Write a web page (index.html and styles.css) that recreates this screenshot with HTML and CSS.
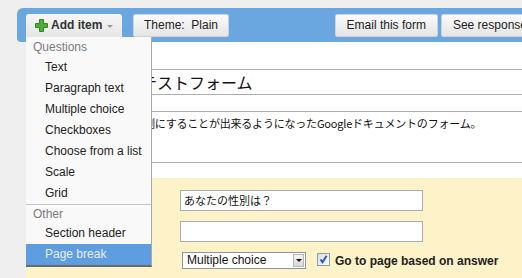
FILE: index.html
```html
<!DOCTYPE html>
<html>
<head>
<meta charset="utf-8">
<link rel="stylesheet" href="styles.css">
</head>
<body>
<div class="page">
  <div class="toolbar">
    <div class="additem">
      <button class="btn btn-add">
        <svg class="plus" width="13" height="13" viewBox="0 0 13 13"><path d="M4.5 0.5h4v4h4v4h-4v4h-4v-4h-4v-4h4z" fill="#4bae36" stroke="#2f8a22" stroke-width="1"/></svg>
        <span class="add-label">Add item</span>
        <span class="caret"></span>
      </button>
      <div class="menu">
        <div class="menu-head">Questions</div>
        <div class="menu-item">Text</div>
        <div class="menu-item">Paragraph text</div>
        <div class="menu-item">Multiple choice</div>
        <div class="menu-item">Checkboxes</div>
        <div class="menu-item">Choose from a list</div>
        <div class="menu-item">Scale</div>
        <div class="menu-item">Grid</div>
        <div class="menu-sep"></div>
        <div class="menu-head menu-head-other">Other</div>
        <div class="menu-item">Section header</div>
        <div class="menu-item active">Page break</div>
      </div>
    </div>
    <button class="btn btn-theme">Theme:&nbsp; Plain</button>
    <div class="right">
      <button class="btn btn-r">Email this form</button>
      <button class="btn btn-r">See responses</button>
    </div>
  </div>
  <div class="content">
    <div class="head">
      <div class="title-box">テストフォーム</div>
      <div class="desc-box">例にすることが出来るようになったGoogleドキュメントのフォーム。</div>
    </div>
    <div class="question">
      <div class="field">あなたの性別は？</div>
      <div class="field"></div>
      <div class="row">
        <div class="select">
          <span class="select-text">Multiple choice</span>
          <span class="select-arrow"><span class="tri"></span></span>
        </div>
        <svg class="check" width="13" height="13" viewBox="0 0 13 13"><defs><linearGradient id="cg" x1="0" y1="0" x2="1" y2="1"><stop offset="0" stop-color="#dcdcd6"/><stop offset="1" stop-color="#ffffff"/></linearGradient></defs><rect x="0.5" y="0.5" width="12" height="12" fill="url(#cg)" stroke="#8d9bad"/><path d="M3.5 6.5L5.5 9.2L9.6 2.8" stroke="#2a59d2" stroke-width="2" fill="none"/></svg>
        <span class="go-label">Go to page based on answer</span>
      </div>
    </div>
  </div>
</div>
</body>
</html>
```

FILE: styles.css
```css
html, body {
  margin: 0;
  padding: 0;
  overflow: hidden;
}
body {
  background: #efefef;
  font-family: "Liberation Sans", Arial, sans-serif;
  font-size: 12px;
  color: #222;
  width: 522px;
  height: 278px;
}
.page {
  padding: 8px 0 0 17px;
  width: 580px;
}
.toolbar {
  display: flex;
  align-items: flex-start;
  width: 537px;
  height: 34px;
  box-sizing: border-box;
  padding: 6px 9px 0 9px;
  background: #6aa6df;
  border-radius: 6px 0 0 4px;
  gap: 11px;
}
.btn {
  height: 23px;
  box-sizing: border-box;
  border: 1px solid #cfd3d7;
  border-radius: 2px;
  background: linear-gradient(#fbfbfb, #e4e4e4);
  font-family: "Liberation Sans", Arial, sans-serif;
  font-size: 12px;
  color: #222;
  padding: 0 10px;
  margin: 0;
  line-height: 21px;
  white-space: nowrap;
  flex-shrink: 0;
}
.additem {
  position: relative;
  width: 96px;
  flex-shrink: 0;
  z-index: 5;
}
.btn-add {
  width: 96px;
  display: flex;
  align-items: center;
  padding: 0 0 0 9px;
  border: none;
  border-radius: 3px 3px 0 0;
  background: linear-gradient(#f6f6f6, #e6e6e6);
}
.plus {
  display: block;
  margin-right: 3px;
}
.add-label {
  font-weight: bold;
  color: #333;
}
.caret {
  display: block;
  width: 0;
  height: 0;
  margin-left: 5px;
  margin-top: 1px;
  border-left: 3px solid transparent;
  border-right: 3px solid transparent;
  border-top: 3px solid #999;
}
.menu {
  position: absolute;
  left: 0;
  top: 23px;
  width: 126px;
  box-sizing: border-box;
  padding-top: 1px;
  background: #f9f9f9;
  border-right: 1px solid #a8a8a8;
  border-bottom: 2px solid #6a6a6a;
}
.menu-head {
  height: 19px;
  line-height: 19px;
  padding-left: 7px;
  color: #7b7b7b;
}
.menu-head-other {
  height: 18px;
  line-height: 19px;
}
.menu-item {
  height: 21px;
  line-height: 21px;
  padding-left: 19px;
  color: #222;
  white-space: nowrap;
}
.menu-item.active {
  background: #5e9de0;
  color: #e6eefa;
}
.menu-sep {
  height: 1px;
  background: #c4c4c4;
}
.btn-theme {
  padding: 0 10px;
}
.right {
  margin-left: auto;
  display: flex;
  gap: 3px;
  flex-shrink: 0;
}
.btn-r {
  padding: 0 11px;
}
.content {
  margin-left: 9px;
  width: 540px;
  background: #fff;
}
.head {
  padding: 27px 0 15px 20px;
}
.title-box {
  height: 24px;
  border: 1px solid #adadad;
  border-right: none;
  padding-left: 94px;
  font-family: "Noto Sans CJK JP", sans-serif;
  font-size: 16px;
  line-height: 24px;
  color: #111;
}
.desc-box {
  margin-top: 16px;
  height: 46px;
  border: 1px solid #adadad;
  border-right: none;
  padding: 4px 0 0 97px;
  font-family: "Noto Sans CJK JP", sans-serif;
  font-size: 11px;
  line-height: 14px;
  letter-spacing: -0.2px;
  color: #111;
  white-space: nowrap;
}
.question {
  background: #fef3c8;
  padding: 12px 0 20px 154px;
  height: 100px;
  box-sizing: border-box;
}
.field {
  width: 243px;
  height: 21px;
  box-sizing: border-box;
  border: 1px solid #a9adb2;
  background: #fff;
  padding-left: 3px;
  font-family: "Noto Sans CJK JP", sans-serif;
  font-size: 11px;
  line-height: 19px;
  color: #111;
  margin-bottom: 10px;
}
.row {
  display: flex;
  align-items: center;
  margin-left: 2px;
}
.select {
  width: 124px;
  height: 17px;
  box-sizing: border-box;
  border: 1px solid #8d939a;
  background: #fff;
  display: flex;
  align-items: center;
  justify-content: space-between;
  padding: 0 1px 0 4px;
}
.select-text {
  font-size: 12px;
  line-height: 15px;
  color: #111;
}
.select-arrow {
  width: 11px;
  height: 13px;
  box-sizing: border-box;
  border: 1px solid #b7b7b7;
  background: linear-gradient(#f4f4f4, #d9d9d9);
  display: flex;
  align-items: center;
  justify-content: center;
}
.tri {
  width: 0;
  height: 0;
  border-left: 3px solid transparent;
  border-right: 3px solid transparent;
  border-top: 3px solid #111;
}
.check {
  display: block;
  margin-left: 11px;
  margin-bottom: 2px;
}
.go-label {
  margin-left: 5px;
  font-weight: bold;
  color: #222;
}
```
